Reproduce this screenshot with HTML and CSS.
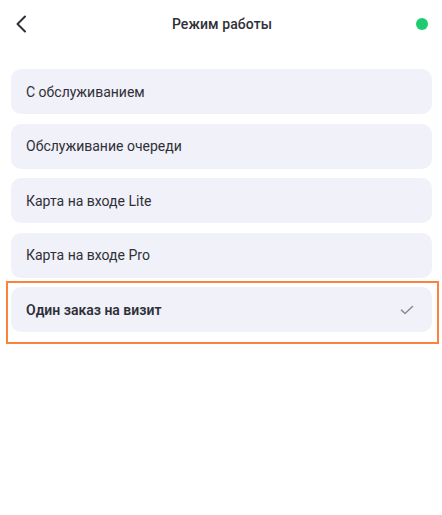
FILE: index.html
```html
<!DOCTYPE html>
<html lang="ru">
<head>
<meta charset="utf-8">
<link rel="stylesheet" href="styles.css">
</head>
<body>
<div class="screen">
  <header class="header">
    <button class="back" aria-label="Назад">
      <svg width="12" height="18" viewBox="0 0 12 18"><path d="M10 1.5 L2.5 9 L10 16.5" fill="none" stroke="#2f3037" stroke-width="2" stroke-linecap="round" stroke-linejoin="round"/></svg>
    </button>
    <h1 class="title">Режим работы</h1>
    <span class="status"></span>
  </header>
  <ul class="list">
    <li class="item">С обслуживанием</li>
    <li class="item">Обслуживание очереди</li>
    <li class="item">Карта на входе Lite</li>
    <li class="item">Карта на входе Pro</li>
    <li class="item selected">
      <span>Один заказ на визит</span>
      <svg class="check" width="14" height="10" viewBox="0 0 14 10"><path d="M1.5 5.2 L5 8.5 L12.5 1.5" fill="none" stroke="#8a8ca0" stroke-width="1.6" stroke-linecap="round" stroke-linejoin="round"/></svg>
      <span class="highlight"></span>
    </li>
  </ul>
</div>
</body>
</html>
```
FILE: styles.css
```css
html, body {
  margin: 0;
  padding: 0;
  background: #ffffff;
}
body {
  font-family: Roboto, "Noto Sans", sans-serif;
  color: #2f3037;
}
.screen {
  width: 442px;
  height: 515px;
}
.header {
  height: 47px;
  display: grid;
  grid-template-columns: 1fr auto 1fr;
  align-items: center;
  padding: 0 10px 0 12px;
  box-sizing: border-box;
}
.back {
  justify-self: start;
  width: 20px;
  height: 24px;
  border: 0;
  padding: 0 0 0 3px;
  background: none;
  display: flex;
  align-items: center;
}
.title {
  margin: 0;
  font-size: 14px;
  font-weight: 500;
  color: #2f3037;
  letter-spacing: 0.1px;
}
.status {
  justify-self: end;
  width: 12px;
  height: 12px;
  border-radius: 50%;
  background: #1dcc70;
  margin-right: 4px;
}
.list {
  list-style: none;
  margin: 0;
  padding: 22px 10px 0 11px;
  display: flex;
  flex-direction: column;
  gap: 9.5px;
}
.item {
  position: relative;
  height: 45px;
  box-sizing: border-box;
  background: #f1f1f9;
  border-radius: 10px;
  padding: 0 15px;
  display: flex;
  align-items: center;
  justify-content: space-between;
  font-size: 14px;
  color: #2f3037;
}
.selected {
  font-weight: 600;
}
.check {
  margin-right: 3px;
}
.highlight {
  position: absolute;
  left: -5px;
  right: -7px;
  top: -6px;
  bottom: -12px;
  border: 2.5px solid #fa8340;
  pointer-events: none;
}
```
